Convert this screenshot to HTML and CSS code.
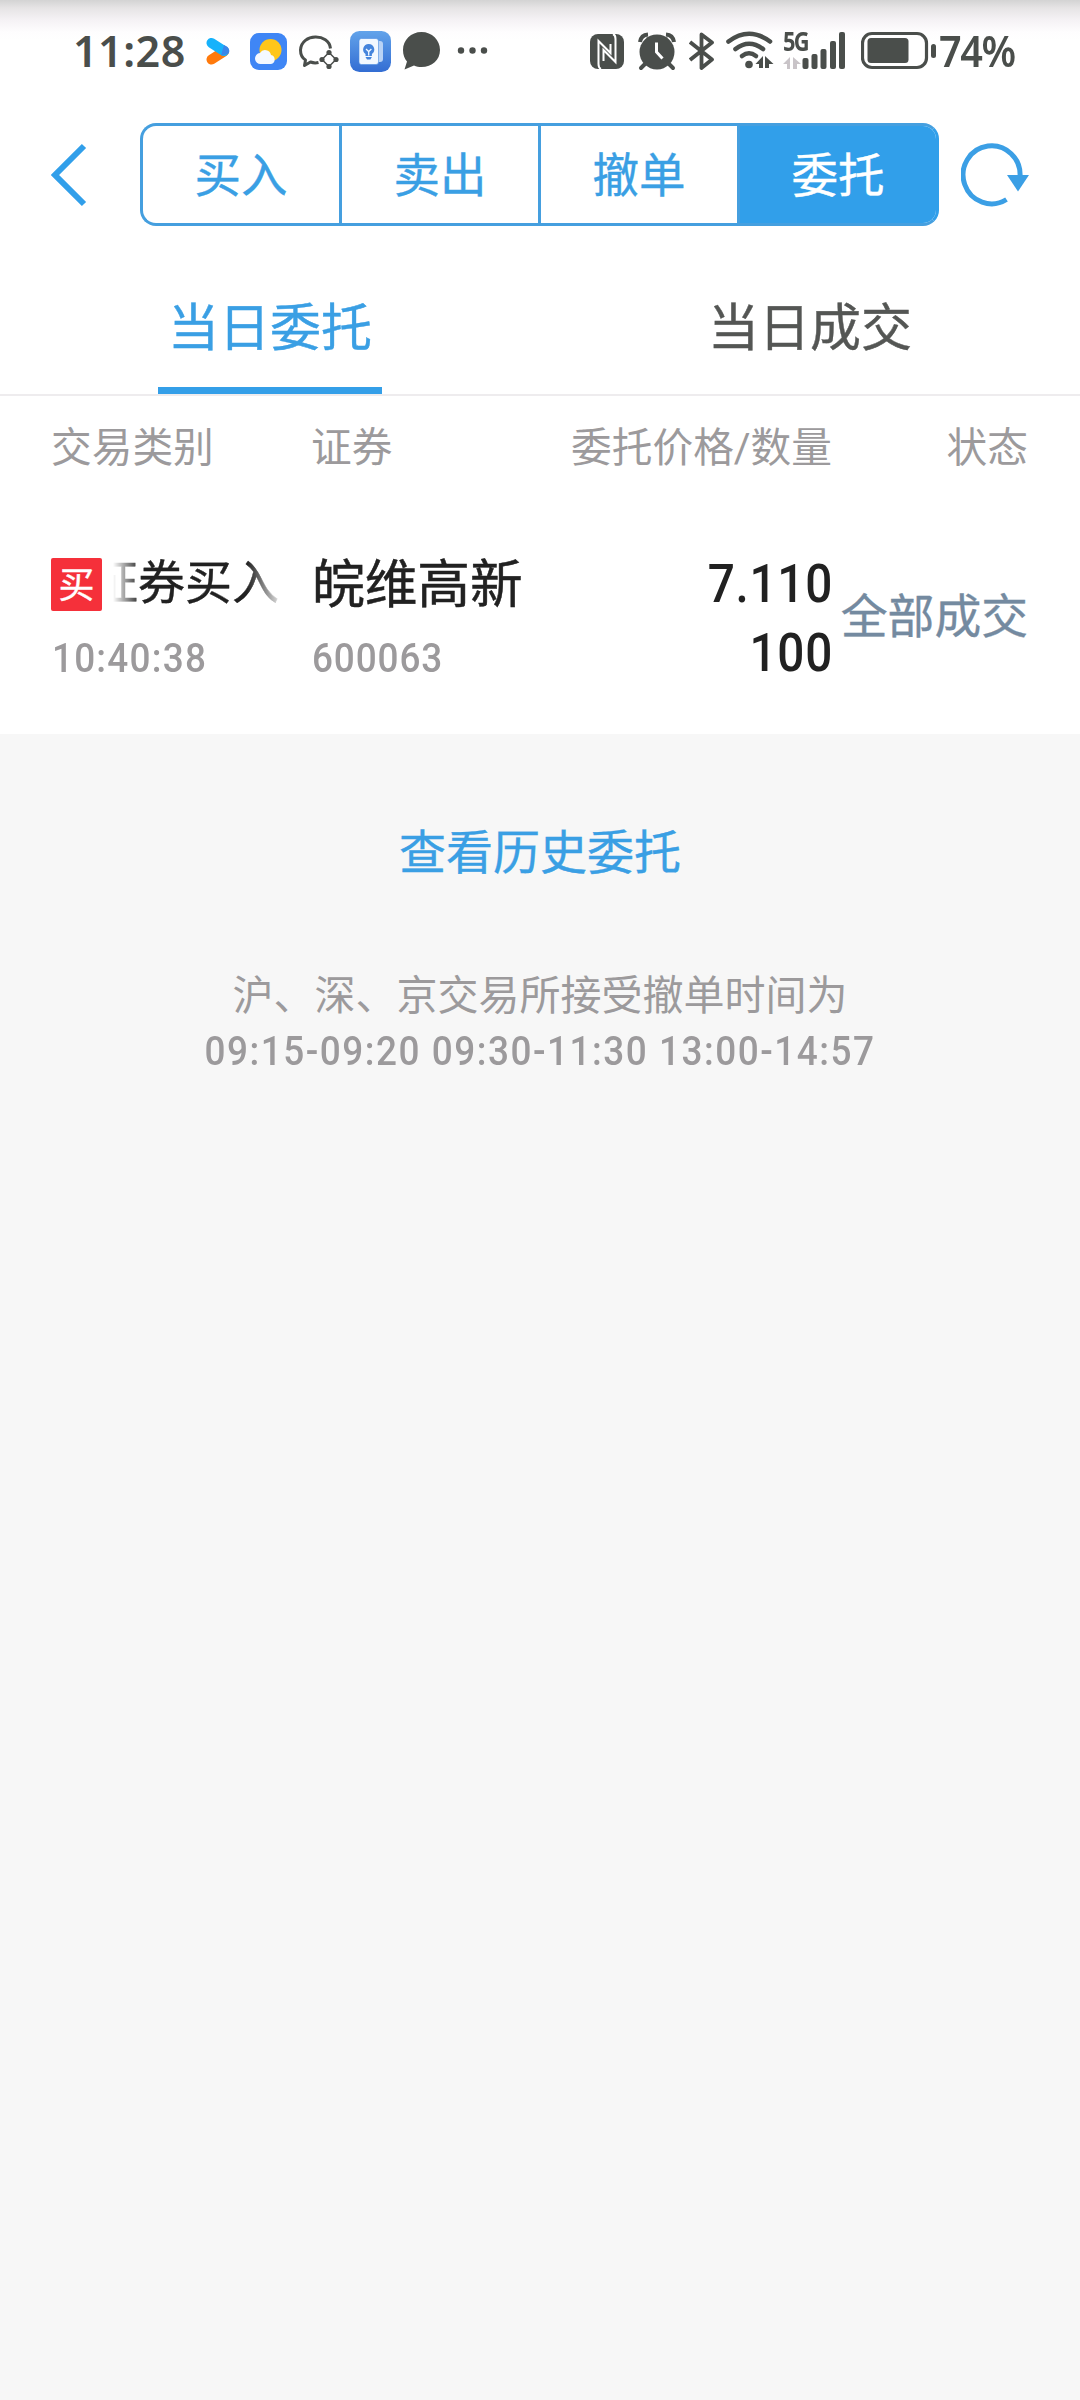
FILE: index.html
```html
<!DOCTYPE html>
<html lang="zh-CN">
  <head>
    <meta charset="UTF-8" />
    <meta name="viewport" content="width=device-width, initial-scale=1.0" />
    <title>当日委托</title>
    <link rel="stylesheet" href="styles.css">
  </head>
  <body>
    <!-- Status bar -->
    <div class="status-bar">
      <span class="clock">11:28</span>
      <div class="status-icons left">
        <svg width="24" height="42" viewBox="0 0 24 42">
          <path d="M5.500 29.500L18 21.500" stroke="#ff7a0c" stroke-width="10" stroke-linecap="round" />
          <path d="M5.500 13L18 21" stroke="#16b2fb" stroke-width="10" stroke-linecap="round" />
          <path d="M15 25.500L22 24Q25 21 21.500 17L18 15Z" fill="#3b86e8" />
        </svg>
        <svg width="37" height="42" viewBox="0 0 37 42">
          <rect y="3" width="37" height="37" rx="9" fill="#3f86f5" />
          <circle cx="20.500" cy="20" r="11" fill="#ffc61a" />
          <path d="M11 34a5.500 5.500 0 0 1-1-11a6 6 0 0 1 11 2a4.600 4.600 0 0 1 0 9z" fill="#f4f9ff" />
        </svg>
        <svg width="41" height="42" viewBox="0 0 41 42" fill="none" stroke="#4a4e4b" stroke-width="3">
          <path d="M32.500 18.500C31 3 3.500 3 2.500 20q0 7 5 10l-1 5.500 6-3.500q4 1.500 8 .5" stroke-linejoin="round" />
          <path d="M31 22.500L24 29.500 31 36.500 38 29.500Z" stroke-width="1.500" />
          <g fill="#4a4e4b" stroke="none">
            <circle cx="31" cy="22.500" r="2.600" />
            <circle cx="24" cy="29.500" r="2.600" />
            <circle cx="31" cy="36.500" r="2.600" />
            <circle cx="38" cy="29.500" r="2.600" />
          </g>
        </svg>
        <svg width="41" height="42" viewBox="0 0 41 42">
          <defs>
            <linearGradient id="note" x1="0" y1="0" x2="0" y2="1">
              <stop offset="0" stop-color="#62a3ea" />
              <stop offset="1" stop-color="#336dd3" />
            </linearGradient>
          </defs>
          <rect y="1" width="41" height="41" rx="9.500" fill="url(#note)" />
          <path d="M27 11h3q3 0 3 3v15q0 3-3 3h-3z" fill="#b9d3f5" />
          <rect x="9" y="8.500" width="19.500" height="26" rx="2.500" fill="#f2f8ff" stroke="#4a8be0" stroke-width="0.600" />
          <path d="M18.700 14a5.500 5.500 0 0 0-3.200 10v2h6.400v-2a5.500 5.500 0 0 0-3.200-10zM15.500 27h6.400l-1.500 2.500h-3.400z" fill="#4484dc" />
          <path d="M16 19l2.700 2.500 2.700-2.500M18.700 21.500v4" fill="none" stroke="#f2f8ff" stroke-width="1.300" />
        </svg>
        <svg width="39" height="42" viewBox="0 0 39 42">
          <path d="M19.500 2C9 2 1 10 1 20c0 5 1.500 8.500 4 11.500L2.500 39.500 12 35.500c2.300 1 5 1.500 7.500 1.500C30 37 38 30 38 20S30 2 19.500 2z" fill="#4a4e4b" />
        </svg>
        <svg width="31" height="42" viewBox="0 0 31 42" fill="#4a4e4b">
          <circle cx="4" cy="20.500" r="3.200" />
          <circle cx="15.500" cy="20.500" r="3.200" />
          <circle cx="27" cy="20.500" r="3.200" />
        </svg>
      </div>
      <div class="status-icons right">
        <svg class="nfc" width="34" height="42" viewBox="0 0 34 42">
          <rect y="4" width="34" height="35" rx="8" fill="#4a4e4b" />
          <path d="M11 39Q8.500 38 8.500 34V11L20.500 23V14M23 4Q25.500 5 25.500 9V32L13.500 20V31" fill="none" stroke="#fff" stroke-width="2" />
        </svg>
        <svg class="alarm" width="38" height="42" viewBox="0 0 38 42">
          <path d="M2 12Q3 5 10 4.500M28 4.500Q35 5 36 12" fill="none" stroke="#4a4e4b" stroke-width="4" />
          <path d="M8 33l-5 5M30 33l5 5" stroke="#4a4e4b" stroke-width="4" stroke-linecap="round" />
          <circle cx="19" cy="22" r="17.500" fill="#4a4e4b" />
          <path d="M18.500 12.500V22l6 6.500" fill="none" stroke="#fff" stroke-width="3" />
        </svg>
        <svg class="bluetooth" width="26" height="42" viewBox="0 0 26 42">
          <path d="M1 12L23 29.500 12.500 38V4.500L23 12.500 1 30" fill="none" stroke="#4a4e4b" stroke-width="3.800" stroke-linejoin="round" />
        </svg>
        <svg class="wifi" width="48" height="42" viewBox="0 0 48 42">
          <g fill="none" stroke="#4a4e4b" stroke-width="4.600" stroke-linecap="round">
            <path d="M2.500 11.500Q23 -4 44 11.500" />
            <path d="M9.500 19Q23 8.500 37 19" />
            <path d="M16 26Q23 20.500 30 26" />
          </g>
          <circle cx="23" cy="34.500" r="3.800" fill="#4a4e4b" />
          <path d="M29.500 34l7.500-8v12h-4v-4zM39 26l8.500 8h-4.500v4h-4z" fill="#4a4e4b" />
        </svg>
        <div class="signal">
          <span class="network">5G</span>
          <svg width="63" height="42" viewBox="0 0 63 42">
            <path d="M0 34l7-7v12H4v-5zM10 27l8 7h-4v5h-4z" fill="#c9c4c8" />
            <g fill="#4a4e4b">
              <rect x="19.500" y="28" width="6" height="11" rx="2" />
              <rect x="28.500" y="24" width="6" height="15" rx="2" />
              <rect x="37.500" y="19" width="6" height="20" rx="2" />
              <rect x="47" y="11" width="6" height="28" rx="2" />
              <rect x="56" y="2" width="6" height="37" rx="2" />
            </g>
          </svg>
        </div>
        <svg class="battery" width="76" height="42" viewBox="0 0 76 42">
          <rect x="1.500" y="3.500" width="64" height="34" rx="9.500" fill="none" stroke="#4a4e4b" stroke-width="3.200" />
          <rect x="6.500" y="8" width="41" height="25" rx="3.500" fill="#4a4e4b" />
          <rect x="70" y="14" width="5" height="14" rx="2.500" fill="#4a4e4b" />
        </svg>
      </div>
      <span class="percent">74%</span>
    </div>

    <!-- Navigation -->
    <div class="nav">
      <svg class="back" width="38" height="66" viewBox="0 0 38 66">
        <path d="M33 4L4 33l29 29" fill="none" stroke="#319fea" stroke-width="6" />
      </svg>
      <div class="segments">
        <div class="segment">买入</div>
        <div class="segment">卖出</div>
        <div class="segment">撤单</div>
        <div class="segment active">委托</div>
      </div>
      <svg class="refresh" width="70" height="66" viewBox="0 0 70 66">
        <path d="M45.500 57.500A28.500 29 0 1 1 59 35" fill="none" stroke="#3b9fe5" stroke-width="5" />
        <path d="M46 33h22L57 49.500z" fill="#3b9fe5" />
      </svg>
    </div>

    <div class="tabs">
      <div class="tab active"><span>当日委托</span></div>
      <div class="tab"><span>当日成交</span></div>
    </div>

    <!-- Orders -->
    <div class="orders">
      <div class="row header">
        <div>交易类别</div>
        <div>证券</div>
        <div class="num">委托价格/数量</div>
        <div class="num">状态</div>
      </div>
      <div class="row order">
        <div>
          <div class="type">
            <span class="badge">买</span>
            <div class="marquee"><span>证券买入</span></div>
          </div>
          <div class="sub time">10:40:38</div>
        </div>
        <div>
          <div class="name">皖维高新</div>
          <div class="sub">600063</div>
        </div>
        <div class="num price">
          <div>7.110</div>
          <div>100</div>
        </div>
        <div class="num state">全部成交</div>
      </div>
    </div>

    <div class="history">查看历史委托</div>
    <div class="tips">
      <div>沪、深、京交易所接受撤单时间为</div>
      <div class="times">09:15-09:20 09:30-11:30 13:00-14:57</div>
    </div>
  </body>
</html>
```
FILE: styles.css
```css
* {
  box-sizing: border-box;
}
body {
  margin: 0;
  min-height: 2400px;
  background: #f7f7f7;
  color: #212121;
  font-family: Roboto, "Noto Sans CJK SC", sans-serif;
}
svg {
  display: block;
  flex: none;
}

/* status bar */
.status-bar {
  display: flex;
  height: 123px;
  padding: 30px 0 0 73px;
  background: linear-gradient(#d3d3d3 0, #e6e4e5 8px, #f5f2f5 20px, #fefdfe 32px, #fff 40px);
  color: #4a4e4b;
  font-family: "Noto Sans", sans-serif;
  font-size: 43px;
  font-weight: 600;
  line-height: 42px;
}
.clock {
  width: 133px;
  letter-spacing: 0.5px;
}
.status-icons {
  display: flex;
}
.left {
  width: 384px;
  gap: 11px;
}
.left svg:first-child {
  margin-right: 9px;
}
.left svg:last-child {
  margin-left: 5px;
}
.alarm {
  margin-left: 14px;
}
.bluetooth {
  margin-left: 13px;
}
.wifi {
  margin-left: 11px;
}
.signal {
  position: relative;
  margin-left: 9px;
}
.network {
  position: absolute;
  top: 1px;
  left: 0;
  font-size: 26px;
  font-weight: 700;
  line-height: 21px;
  letter-spacing: -2px;
  transform: scaleX(0.84);
  transform-origin: left;
}
.battery {
  margin-left: 15px;
}
.percent {
  margin-left: 2px;
  letter-spacing: -1.5px;
  transform: scaleX(0.92);
  transform-origin: left;
}

/* nav */
.nav {
  display: flex;
  align-items: center;
  height: 103px;
  padding-left: 51px;
  background: #fff;
}
.segments {
  display: flex;
  width: 799px;
  height: 103px;
  margin: 0 22px 0 51px;
  border: 3px solid #459fdf;
  border-radius: 16px;
  overflow: hidden;
}
.segment {
  flex: 1;
  color: #3a9fe4;
  font-size: 46.5px;
  line-height: 101px;
  text-align: center;
  -webkit-text-stroke: 0.4px;
}
.segment + .segment {
  border-left: 3px solid #459fdf;
}
.segment.active {
  background: #319fea;
  color: #fff;
}
.segments:has(.active:last-child) {
  border-right-color: #319fea;
}

/* tabs */
.tabs {
  display: flex;
  height: 170px;
  padding-top: 44px;
  background: #fff;
  border-bottom: 2px solid #eeecee;
}
.tab {
  flex: 1;
  color: #545654;
  font-size: 51px;
  line-height: 118px;
  text-align: center;
  -webkit-text-stroke: 0.4px;
}
.tab span {
  display: inline-block;
  height: 124px;
  padding: 0 10px;
}
.tab.active span {
  border-bottom: 7px solid #349fe8;
  color: #3a9fe4;
}

/* orders */
.orders {
  height: 338px;
  background: #fff;
}
.row {
  display: grid;
  grid-template-columns: 260px 220px 301px 196px;
  padding: 0 52px 0 51px;
}
.header {
  height: 150px;
  color: #9c9a9c;
  font-size: 40.7px;
  line-height: 104px;
}
.num {
  text-align: right;
}
.type {
  display: flex;
  height: 77px;
  padding-top: 12px;
}
.badge {
  width: 51px;
  height: 53px;
  margin-right: 11px;
  border-radius: 2px;
  background: #f5303a;
  color: #fff;
  font-size: 36px;
  line-height: 57px;
  text-align: center;
  -webkit-text-stroke: 0.4px;
}
.marquee {
  width: 168px;
  height: 60px;
  overflow: hidden;
  font-size: 47px;
  line-height: 49px;
  white-space: nowrap;
  -webkit-text-stroke: 0.4px;
  -webkit-mask-image: linear-gradient(90deg, transparent, #000 28px, #000 134px, rgba(0, 0, 0, 0.1));
  mask-image: linear-gradient(90deg, transparent, #000 28px, #000 134px, rgba(0, 0, 0, 0.1));
}
.marquee span {
  display: inline-block;
  margin-left: -22px;
}
.name {
  height: 77px;
  padding-left: 1px;
  font-size: 52.7px;
  line-height: 78px;
  -webkit-text-stroke: 0.5px;
}
/* narrow figures */
.sub,
.price div,
.times {
  font-weight: 500;
  transform: scaleX(0.9);
}
.sub {
  padding-left: 1px;
  color: #9c9a9c;
  font-size: 41px;
  line-height: 71px;
  letter-spacing: 1px;
  transform-origin: left;
}
.time {
  letter-spacing: 1.4px;
}
.price {
  padding-top: 4px;
  font-size: 53px;
  line-height: 69px;
}
.price div {
  letter-spacing: 0.8px;
  margin-right: -1px;
  transform-origin: right;
}
.state {
  color: #748aa0;
  font-size: 46.8px;
  line-height: 143px;
  white-space: nowrap;
  -webkit-text-stroke: 0.4px;
}

/* footer */
.history {
  margin-top: 74px;
  color: #3a9fe4;
  font-size: 47px;
  line-height: 90px;
  text-align: center;
  -webkit-text-stroke: 0.4px;
}
.tips {
  margin-top: 71px;
  color: #9c9a9c;
  font-size: 41px;
  line-height: 55px;
  text-align: center;
}
.times {
  letter-spacing: 1.7px;
  white-space: nowrap;
}
```
